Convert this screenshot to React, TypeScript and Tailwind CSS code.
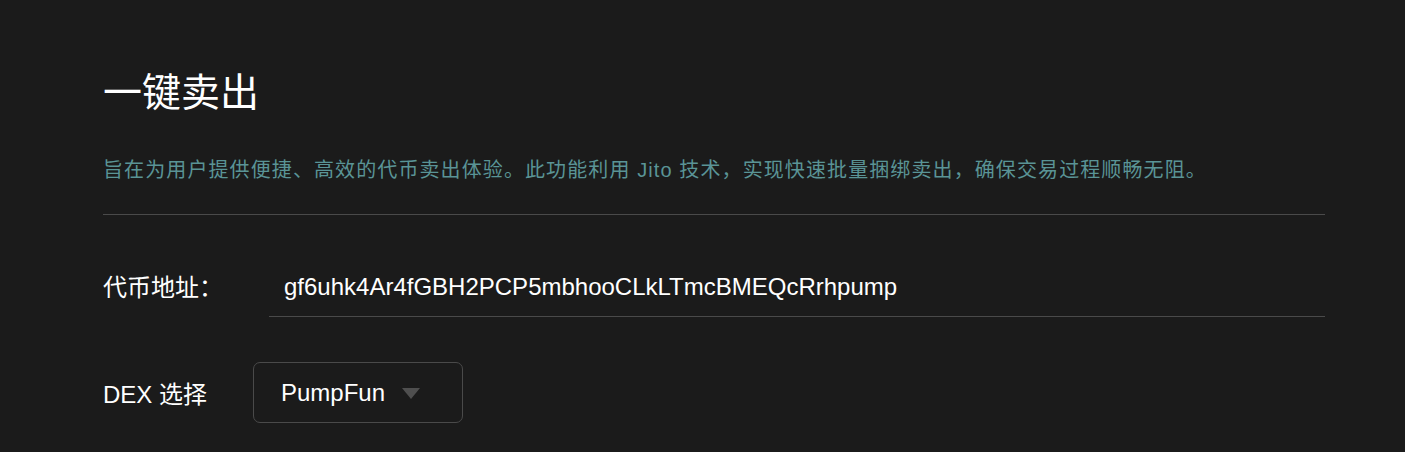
const App = () => {
  return (
    <div
      className="min-h-[452px] bg-[#1b1b1b] text-white pl-[103px] pr-[80px] pt-[70px]"
      style={{ fontFamily: '"Liberation Sans", "Noto Sans CJK SC", sans-serif' }}
    >
      <h1 className="text-[39px] leading-[46px]">一键卖出</h1>
      <p className="mt-[40px] text-[20px] leading-[28px] text-[#5a9496] tracking-[1.1px]">
        旨在为用户提供便捷、高效的代币卖出体验。此功能利用 Jito 技术，实现快速批量捆绑卖出，确保交易过程顺畅无阻。
      </p>
      <div className="mt-[30px] h-px bg-[#4a4a4a]" />

      <div className="mt-[56px] flex items-end">
        <label className="w-[166px] text-[24px] leading-[32px] pb-[13px]">代币地址：</label>
        <div className="flex-1 border-b border-[#4a4a4a] pl-[15px] pb-[13px]">
          <span className="text-[24px] leading-[32px]">gf6uhk4Ar4fGBH2PCP5mbhooCLkLTmcBMEQcRrhpump</span>
        </div>
      </div>

      <div className="mt-[45px] flex items-center">
        <label className="w-[150px] text-[24px] leading-[32px] pt-[4px]">DEX 选择</label>
        <button className="h-[61px] w-[210px] rounded-[7px] border border-[#4a4a4a] flex items-center pl-[27px] gap-[17px]">
          <span className="text-[24px] leading-[32px]">PumpFun</span>
          <svg width="18" height="11" viewBox="0 0 18 11" className="mt-[2px]">
            <polygon points="0,0 18,0 9,11" fill="#4f4f4f" />
          </svg>
        </button>
      </div>
    </div>
  );
};

export default App;
